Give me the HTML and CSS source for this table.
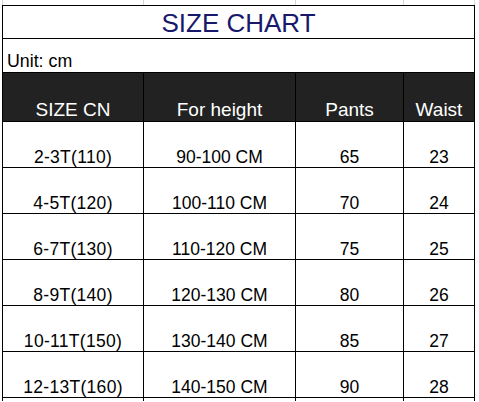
FILE: index.html
```html
<!DOCTYPE html>
<html>
<head>
<meta charset="utf-8">
<link rel="stylesheet" href="styles.css">
</head>
<body>
<div class="sheet">
  <div class="strip">
    <div></div><div></div><div></div><div></div>
  </div>
  <div class="chart">
    <div class="cell title">SIZE CHART</div>
    <div class="cell unit">Unit: cm</div>
    <div class="cell head">SIZE CN</div>
    <div class="cell head">For height</div>
    <div class="cell head">Pants</div>
    <div class="cell head">Waist</div>

    <div class="cell size">2-3T(110)</div>
    <div class="cell">90-100 CM</div>
    <div class="cell">65</div>
    <div class="cell">23</div>

    <div class="cell size">4-5T(120)</div>
    <div class="cell">100-110 CM</div>
    <div class="cell">70</div>
    <div class="cell">24</div>

    <div class="cell size">6-7T(130)</div>
    <div class="cell">110-120 CM</div>
    <div class="cell">75</div>
    <div class="cell">25</div>

    <div class="cell size">8-9T(140)</div>
    <div class="cell">120-130 CM</div>
    <div class="cell">80</div>
    <div class="cell">26</div>

    <div class="cell size">10-11T(150)</div>
    <div class="cell">130-140 CM</div>
    <div class="cell">85</div>
    <div class="cell">27</div>

    <div class="cell size">12-13T(160)</div>
    <div class="cell">140-150 CM</div>
    <div class="cell">90</div>
    <div class="cell">28</div>

    <div class="cell"></div>
    <div class="cell"></div>
    <div class="cell"></div>
    <div class="cell"></div>
  </div>
</div>
</body>
</html>
```

FILE: styles.css
```css
html, body {
  margin: 0;
  padding: 0;
  background: #fff;
  overflow: hidden;
}

body {
  width: 479px;
  height: 402px;
  font-family: "Liberation Sans", Arial, sans-serif;
  color: #000;
}

.sheet {
  padding-left: 2px;
}

.strip {
  display: grid;
  grid-template-columns: 140px 151px 107px 70px;
  column-gap: 1px;
  padding: 0 1px;
  width: 471px;
  height: 5px;
  background: #d6d6d6;
}

.strip div {
  background: #fff;
}

.chart {
  display: grid;
  grid-template-columns: 140px 151px 107px 70px;
  grid-template-rows: 32px 33px 48px repeat(6, 45px) 3px;
  gap: 1px;
  padding: 1px 1px 0;
  width: 471px;
  background: #000;
}

.cell {
  background: #fff;
  display: flex;
  align-items: flex-end;
  justify-content: center;
  font-size: 17.5px;
  line-height: 20px;
  white-space: nowrap;
}

.title {
  grid-column: 1 / -1;
  font-size: 26px;
  line-height: 30px;
  color: #18186c;
}

.unit {
  grid-column: 1 / -1;
  justify-content: flex-start;
  padding-left: 4px;
  padding-bottom: 1px;
  font-size: 17.8px;
}

.head {
  background: #222;
  color: #fff;
  font-size: 19px;
  line-height: 22px;
}

.size {
  letter-spacing: 0.3px;
}
```
